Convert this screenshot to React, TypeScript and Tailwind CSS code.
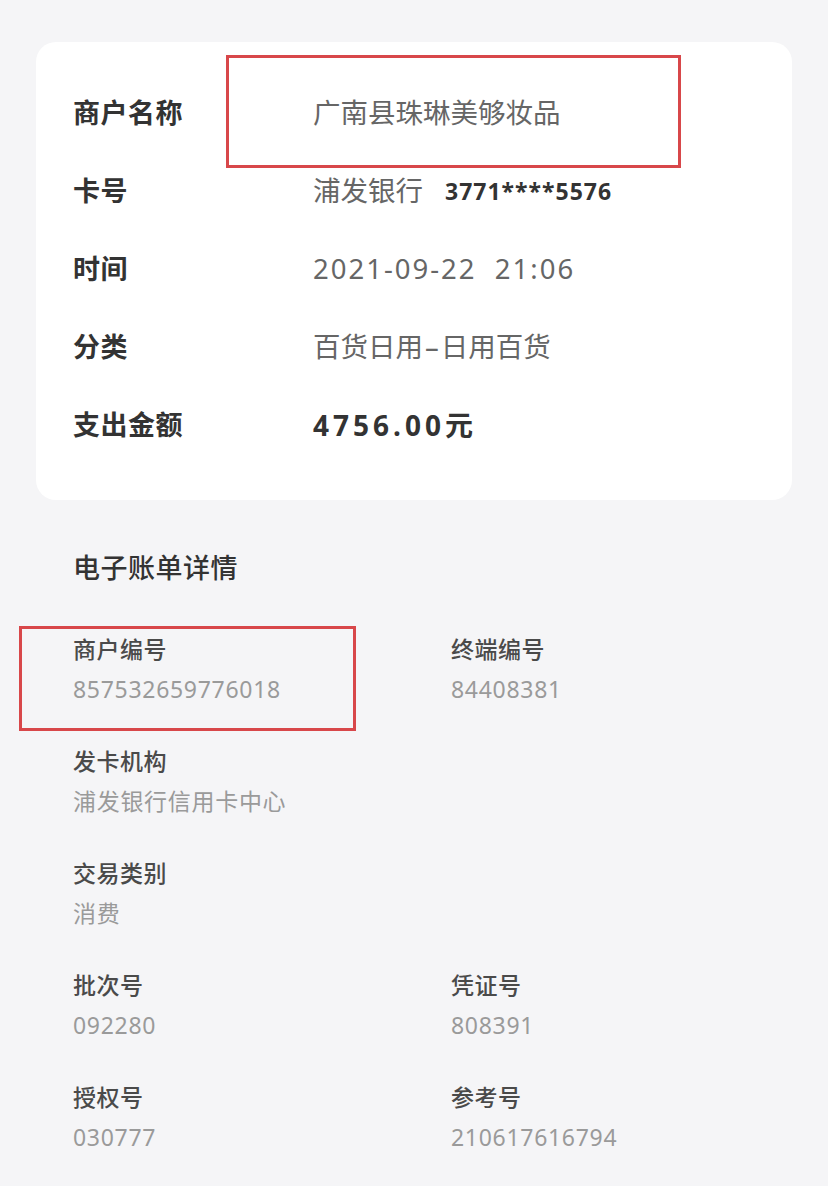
import React from "react";

const font = { fontFamily: '"Noto Sans", "Noto Sans CJK SC", sans-serif' };

function Row({ label, children }: { label: string; children: React.ReactNode }) {
  return (
    <div className="flex h-[78px] items-center">
      <div className="w-[240px] text-[27px] font-bold tracking-[0.5px] text-[#333333]">{label}</div>
      <div className="flex items-center text-[27.5px] text-[#666666]">{children}</div>
    </div>
  );
}

function Item({ label, value }: { label: string; value: string }) {
  return (
    <div className="flex flex-col">
      <div className="h-[32px] text-[23px] leading-[32px] font-medium tracking-[0.5px] text-[#4a4a4a]">{label}</div>
      <div className="mt-[8px] h-[32px] text-[23px] leading-[32px] tracking-[0.7px] text-[#9a9a9a]">{value}</div>
    </div>
  );
}

export default function App() {
  return (
    <div className="relative min-h-[1186px] w-full bg-[#f5f5f7] pt-[42px]" style={font}>
      <div className="mx-[36px] rounded-[20px] bg-white pl-[37px] pt-[32px] pb-[36px]">
        <Row label="商户名称">广南县珠琳美够妆品</Row>
        <Row label="卡号">
          <span>浦发银行</span>
          <span className="ml-[22px] text-[23px] font-bold tracking-[1px] text-[#333333]">3771****5576</span>
        </Row>
        <Row label="时间">
          <span className="tracking-[2px]">2021-09-22&nbsp;&nbsp;21:06</span>
        </Row>
        <Row label="分类">
          <span>百货日用</span>
          <span className="mx-[2px]">–</span>
          <span>日用百货</span>
        </Row>
        <Row label="支出金额">
          <span className="text-[28px] font-bold tracking-[4px] text-[#333333]">4756.00元</span>
        </Row>
      </div>

      <div className="px-[73px] pt-[48px]">
        <div className="h-[40px] text-[27px] leading-[40px] font-medium tracking-[0.5px] text-[#333333]">电子账单详情</div>
        <div className="mt-[45px] grid grid-cols-[378px_1fr] gap-y-[40px]">
          <Item label="商户编号" value="857532659776018" />
          <Item label="终端编号" value="84408381" />
          <Item label="发卡机构" value="浦发银行信用卡中心" />
          <div />
          <Item label="交易类别" value="消费" />
          <div />
          <Item label="批次号" value="092280" />
          <Item label="凭证号" value="808391" />
          <Item label="授权号" value="030777" />
          <Item label="参考号" value="210617616794" />
        </div>
      </div>

      <div className="absolute left-[226px] top-[55px] h-[113px] w-[455px] border-[3px] border-[#d8474a]" />
      <div className="absolute left-[19px] top-[626px] h-[105px] w-[337px] border-[3px] border-[#d8474a]" />
    </div>
  );
}
